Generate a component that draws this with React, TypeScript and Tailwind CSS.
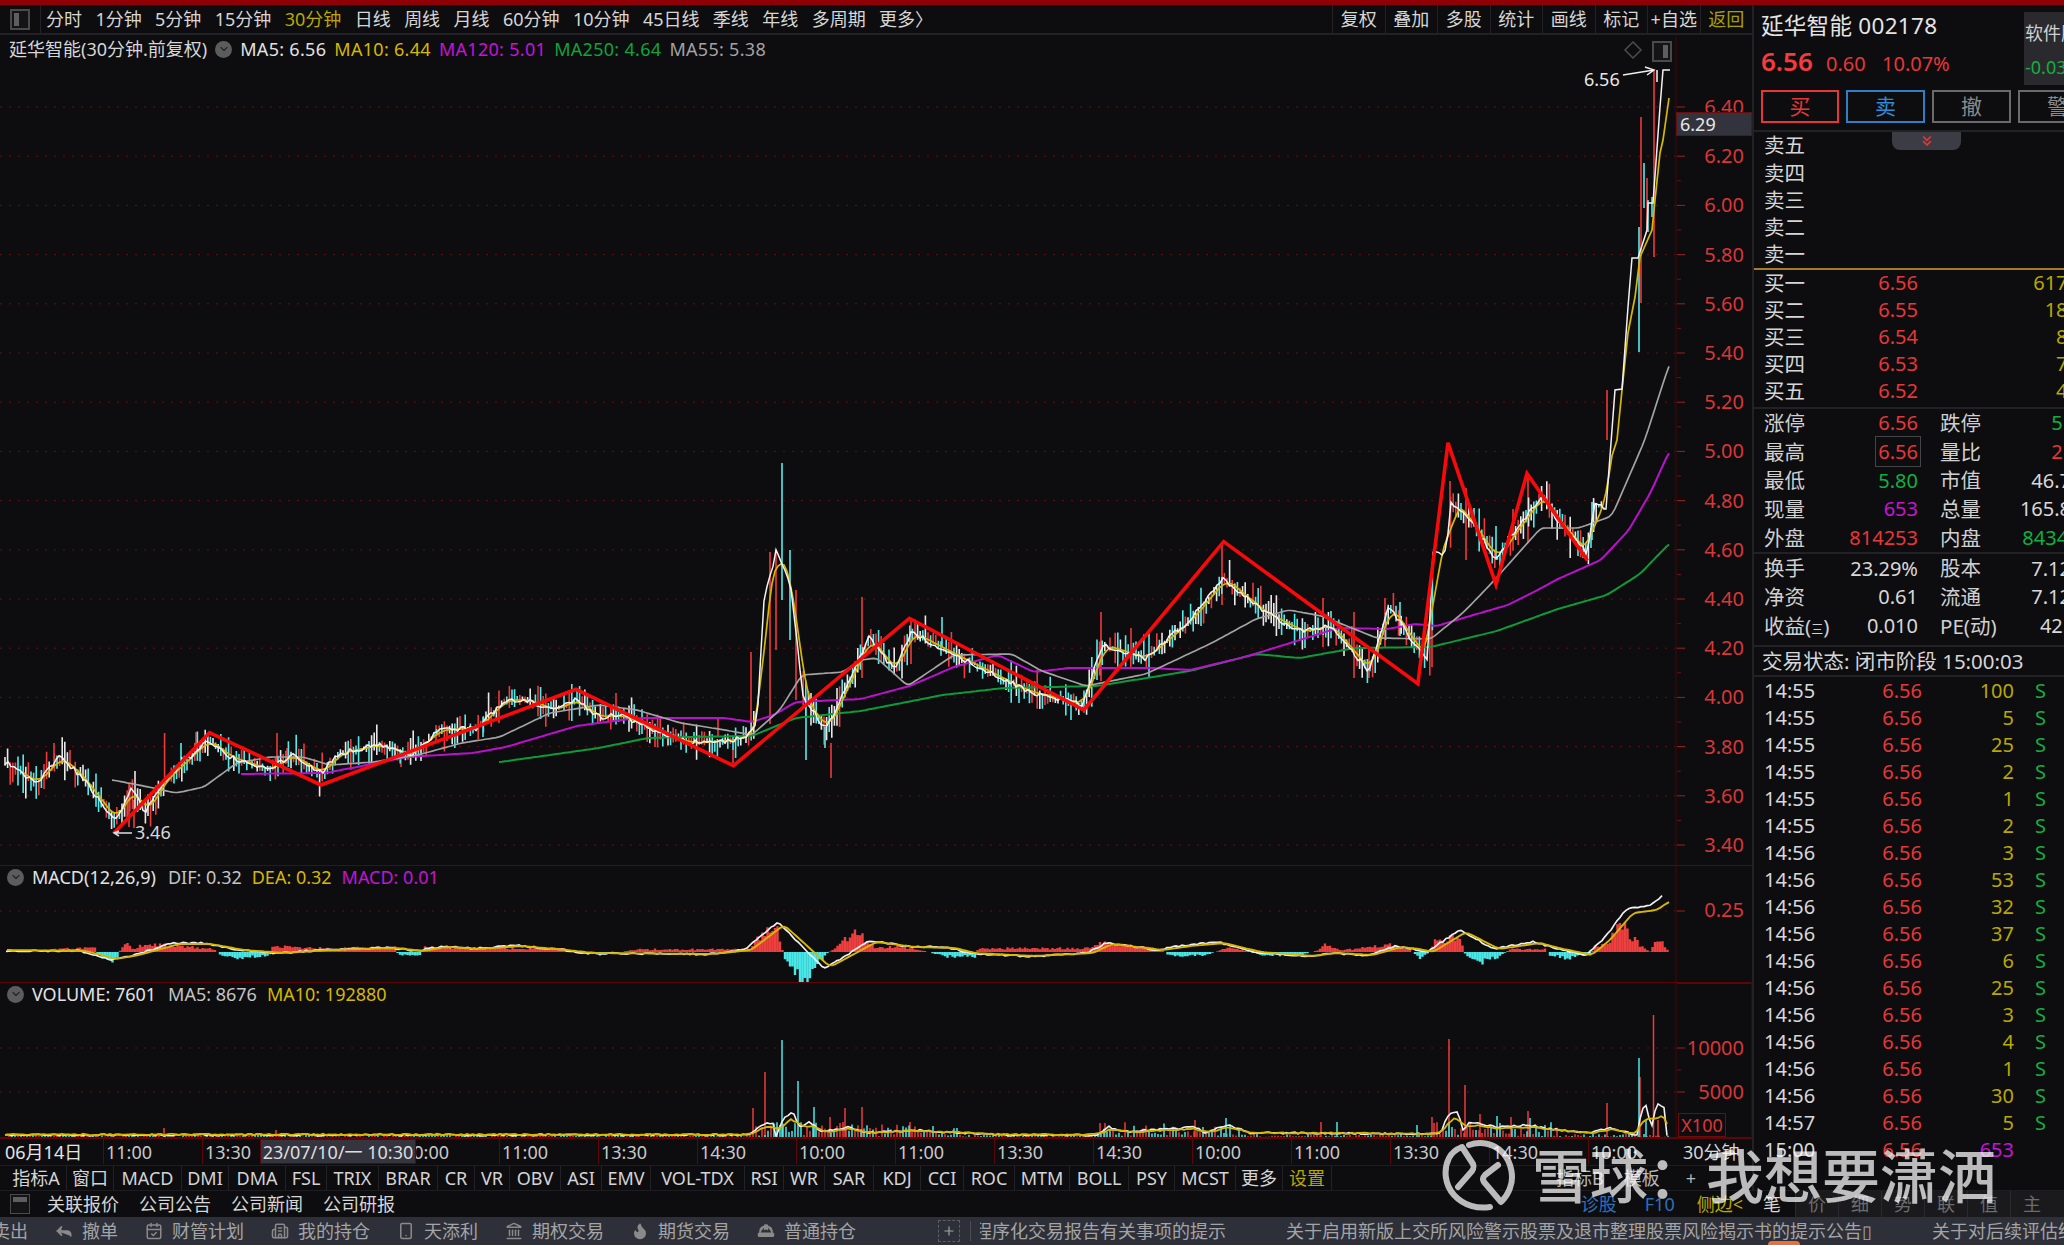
import { ChevronDown, ChevronsDown, Reply, CalendarCheck, Building2, Smartphone, Landmark, Flame, HardHat, Plus } from "lucide-react";

type Pt = [number, number];

const ZIGZAG: Pt[] = [[114, 833], [209.5, 732.7], [321, 785], [576, 689.3], [733.4, 765.7], [909.4, 618.4], [1083.8, 710], [1223.7, 541.6], [1417.9, 683.8], [1448, 442.8], [1496, 584.6], [1527, 473.4], [1587.4, 560.5]];

const MA5: Pt[] = [[5, 762], [36, 783], [60, 757], [82, 777], [115, 820], [132, 788], [145, 813], [165, 780], [208, 740], [230, 757], [269, 770], [291, 755], [321, 773], [340, 753], [378, 745], [411, 755], [439, 730], [477, 728], [505, 700], [527, 700], [554, 710], [576, 700], [598, 717], [620, 715], [658, 732], [691, 743], [735, 740], [751, 733], [757, 724], [764, 600], [776, 552], [790, 580], [803, 697], [826, 730], [869, 638], [895, 671], [911, 632], [961, 658], [1027, 691], [1082, 704], [1103, 645], [1145, 658], [1191, 619], [1224, 579], [1264, 612], [1303, 632], [1330, 625], [1369, 671], [1389, 605], [1415, 645], [1428, 658], [1433, 553], [1447, 553], [1450, 500], [1469, 519], [1496, 559], [1521, 523], [1543, 495], [1556, 519], [1587, 553], [1595, 505], [1606, 509], [1615, 390], [1622, 389], [1628, 307], [1632, 258], [1638, 258], [1647, 230], [1648, 203], [1653, 203], [1660, 107], [1663, 70], [1670, 70]];

const MA10_END: Pt[] = [[1617, 440], [1622, 390], [1628, 333], [1635, 297], [1640, 257], [1652, 230], [1655, 200], [1660, 153], [1663, 140], [1669, 98]];

const MA55: Pt[] = [[112, 780], [148, 787], [175, 793], [203, 787], [236, 763], [269, 757], [302, 757], [329, 765], [373, 762], [417, 755], [461, 743], [499, 737], [549, 713], [598, 705], [636, 710], [680, 723], [724, 730], [751, 735], [779, 710], [801, 675], [842, 672], [860, 660], [876, 658], [907, 686], [953, 655], [1011, 654], [1041, 671], [1085, 686], [1145, 674], [1211, 643], [1255, 619], [1288, 610], [1321, 616], [1376, 638], [1430, 639], [1463, 612], [1491, 583], [1540, 528], [1578, 528], [1611, 516], [1644, 440], [1660, 390], [1670, 360]];

const MA120: Pt[] = [[241, 774], [324, 773], [351, 768], [406, 757], [472, 753], [505, 747], [576, 726], [620, 720], [642, 718], [724, 718], [751, 722], [773, 715], [795, 702], [860, 699], [909, 686], [953, 667], [997, 655], [1033, 672], [1068, 668], [1151, 668], [1189, 670], [1244, 657], [1299, 640], [1337, 628], [1387, 629], [1414, 624], [1436, 626], [1469, 616], [1507, 605], [1535, 591], [1557, 579], [1600, 560], [1628, 530], [1650, 492], [1669, 450]];

const MA250: Pt[] = [[499, 762], [549, 755], [598, 748], [647, 738], [686, 737], [751, 736], [795, 718], [860, 711], [942, 695], [1003, 688], [1096, 686], [1189, 671], [1255, 654], [1299, 658], [1354, 648], [1430, 647], [1496, 631], [1557, 609], [1606, 595], [1639, 574], [1669, 543]];

const SPIKES: [number, number, number, string][] = [
  [54, 743, 763, "r"], [129, 783, 827, "r"], [134, 800, 828, "r"], [164.6, 733, 780, "r"], [181, 743, 763, "c"], [196, 732, 750, "r"], [277, 733, 763, "r"], [287, 748, 763, "r"], [401, 750, 767, "r"], [436, 725, 743, "r"], [483, 717, 737, "c"], [616, 693, 720, "r"], [655, 730, 747, "r"], [718, 718, 737, "r"], [733, 750, 763, "r"], [751, 652, 735, "r"],
  [770, 552, 724, "r"], [776, 550, 650, "r"], [782, 463, 600, "c"], [790, 550, 640, "c"], [796, 590, 700, "r"], [806, 700, 760, "c"], [825, 727, 748, "c"], [831, 743, 778, "r"],
  [862, 597, 678, "r"], [911, 619, 664, "r"], [942, 617, 647, "c"], [1101, 612, 681, "r"], [1131, 628, 660, "r"], [1222, 543, 605, "r"], [1323, 598, 647, "r"], [1354, 612, 678, "r"], [1369, 647, 678, "r"], [1385, 598, 647, "r"], [1400, 602, 636, "c"], [1432, 612, 667, "r"], [1450, 481, 526, "r"], [1466, 488, 560, "r"], [1496, 526, 560, "c"], [1513, 509, 550, "r"], [1528, 474, 543, "r"], [1592, 502, 540, "c"],
  [1607, 390, 440, "r"], [1641, 117, 303, "r"], [1639, 227, 352, "c"], [1644, 163, 208, "c"], [1647, 178, 230, "r"], [1648, 200, 232, "c"], [1654, 70, 257, "r"], [1652, 197, 217, "c"], [1657, 70, 82, "w"],
];

const DEA: Pt[] = [[7, 950], [85, 951], [115, 959], [138, 955], [178, 944], [210, 944], [243, 950], [283, 953], [329, 950], [395, 948], [421, 951], [447, 947], [480, 949], [520, 946], [566, 950], [592, 953], [711, 954], [750, 950], [783, 925], [803, 943], [829, 967], [855, 953], [875, 942], [914, 947], [954, 948], [974, 953], [1032, 956], [1092, 953], [1111, 944], [1162, 950], [1190, 946], [1223, 943], [1260, 952], [1311, 956], [1335, 953], [1372, 955], [1400, 947], [1418, 949], [1432, 952], [1465, 932], [1498, 949], [1539, 943], [1558, 948], [1591, 955], [1609, 940], [1632, 913], [1656, 910], [1669, 901]];

// positive is red, above the zero line; negative is cyan
const HIST: Pt[] = [[40, 0], [60, 4], [95, 4], [98, -4], [115, -10], [119, -2], [121, 5], [125, 12], [132, 3], [145, 8], [180, 7], [215, 3], [220, -4], [245, -7], [270, -3], [273, 6], [300, 5], [325, 4], [395, 5], [398, -3], [420, -3], [425, 5], [500, 4], [560, 4], [600, -3], [640, 3], [750, 3], [770, 30], [778, 26], [783, 0], [785, -8], [805, -36], [826, -2], [835, 4], [855, 24], [875, 4], [890, 6], [915, 4], [945, -5], [975, -5], [978, 4], [1090, 4], [1100, 10], [1120, 8], [1160, 3], [1170, -4], [1205, -4], [1230, 6], [1260, -3], [1300, -4], [1320, 3], [1326, 10], [1340, 2], [1375, 6], [1392, 9], [1410, 3], [1420, -7], [1430, 0], [1435, 14], [1460, 15], [1464, 0], [1466, -4], [1480, -12], [1500, -5], [1510, 3], [1545, 3], [1550, -4], [1570, -7], [1590, -3], [1595, 6], [1610, 9], [1614, 23], [1625, 26], [1640, 7], [1650, 1], [1655, 12], [1662, 13], [1668, 2]];

const VOL_WHITE: Pt[] = [[5, 1135], [750, 1135], [753, 1132], [766, 1123], [773, 1123], [776, 1136], [784, 1117], [793, 1112], [799, 1127], [809, 1122], [822, 1132], [849, 1127], [868, 1133], [914, 1130], [1000, 1135], [1095, 1135], [1102, 1132], [1109, 1127], [1125, 1132], [1195, 1127], [1205, 1133], [1227, 1125], [1251, 1133], [1320, 1133], [1440, 1134], [1449, 1113], [1458, 1112], [1463, 1130], [1470, 1122], [1497, 1127], [1530, 1125], [1544, 1128], [1590, 1133], [1609, 1128], [1637, 1135], [1642, 1108], [1647, 1105], [1651, 1130], [1657, 1103], [1664, 1108], [1667, 1135], [1669, 1136]];

const VOL_SPIKES: [number, number, string][] = [[164, 1128, "r"], [276, 1130, "r"], [753, 1108, "r"], [765, 1072, "r"], [782, 1040, "c"], [798, 1081, "c"], [814, 1107, "c"], [830, 1117, "r"], [845, 1108, "r"], [862, 1107, "r"], [910, 1122, "r"], [1100, 1123, "r"], [1105, 1123, "r"], [1195, 1120, "r"], [1226, 1118, "c"], [1321, 1122, "r"], [1337, 1122, "c"], [1417, 1125, "c"], [1432, 1117, "r"], [1449, 1039, "r"], [1465, 1085, "r"], [1480, 1114, "r"], [1497, 1116, "c"], [1511, 1117, "r"], [1528, 1111, "r"], [1530, 1118, "c"], [1607, 1103, "r"], [1639, 1058, "c"], [1640, 1077, "r"], [1646, 1120, "c"], [1653.5, 1015, "r"], [1658, 1120, "r"]];

let seed = 91;
function rnd() {
  seed = (seed * 16807) % 2147483647;
  return seed / 2147483647;
}

function at(pts: Pt[], x: number) {
  if (x <= pts[0][0]) return pts[0][1];
  for (let i = 1; i < pts.length; i++) {
    if (x <= pts[i][0]) {
      const [x0, y0] = pts[i - 1];
      const [x1, y1] = pts[i];
      return y0 + ((y1 - y0) * (x - x0)) / (x1 - x0 || 1);
    }
  }
  return pts[pts.length - 1][1];
}

function toLine(pts: Pt[]) {
  return pts.map((p) => `${p[0].toFixed(1)},${p[1].toFixed(1)}`).join(" ");
}

function smoothed(pts: Pt[], from: number, to: number, win: number, step = 3) {
  const out: Pt[] = [];
  for (let x = from; x <= to; x += step) {
    let sum = 0;
    for (let k = 0; k < win; k++) sum += at(pts, x - k + win / 3);
    out.push([x, sum / win]);
  }
  return out;
}

// sampled line with a little jitter so it does not look ruled
function jittered(pts: Pt[], from: number, to: number, amount: number, step = 3) {
  const out: Pt[] = [];
  for (let x = from; x <= to; x += step) {
    out.push([x, at(pts, x) + (rnd() - 0.5) * amount]);
  }
  return out;
}

function buildCandles() {
  let red = "";
  let cyan = "";
  let white = "";
  for (let x = 5; x < 1606; x += 2.6) {
    if ((x > 756 && x < 802) || (x > 1433 && x < 1450)) continue;
    const c = at(MA5, x);
    const prev = at(MA5, x - 3);
    const len = 5 + rnd() * 20;
    const top = Math.min(c, prev) - rnd() * len;
    const bot = Math.max(c, prev) + rnd() * len;
    const seg = `M${x.toFixed(1)} ${top.toFixed(1)}V${bot.toFixed(1)}`;
    const r = rnd();
    if (r < 0.28) red += seg;
    else if (r < 0.68) cyan += seg;
    else white += seg;
  }
  SPIKES.forEach(([x, a, b, col]) => {
    const seg = `M${x} ${a}V${b}`;
    if (col === "r") red += seg;
    else if (col === "c") cyan += seg;
    else white += seg;
  });
  return { red, cyan, white };
}

function buildHist() {
  let red = "";
  let cyan = "";
  for (let x = 40; x < 1669; x += 2.5) {
    const h = at(HIST, x);
    if (Math.abs(h) < 0.6) continue;
    const v = h * (0.6 + rnd() * 0.6);
    const seg = `M${x} 952V${(952 - v).toFixed(1)}`;
    if (h > 0) red += seg;
    else cyan += seg;
  }
  return { red, cyan };
}

function buildVolume() {
  let red = "";
  let cyan = "";
  for (let x = 6; x < 1669; x += 3) {
    const busy = (x > 750 && x < 960) || (x > 1095 && x < 1240) || (x > 1430 && x < 1560);
    const h = busy ? 2 + rnd() * 14 : 1 + rnd() * 3;
    const seg = `M${x} 1138V${(1138 - h).toFixed(1)}`;
    if (rnd() < 0.55) red += seg;
    else cyan += seg;
  }
  VOL_SPIKES.forEach(([x, y, col]) => {
    const seg = `M${x} 1138V${y}`;
    if (col === "r") red += seg;
    else cyan += seg;
  });
  return { red, cyan };
}

const candles = buildCandles();
const hist = buildHist();
const vol = buildVolume();
const MA5_LINE: Pt[] = [...jittered(MA5, 5, 1604, 5), ...MA5.filter((p) => p[0] >= 1606)];
const MA10: Pt[] = [...smoothed(MA5, 22, 1612, 18), ...MA10_END];
const MA55_LINE = smoothed(MA55, 112, 1670, 8);
const MA120_LINE = smoothed(MA120, 241, 1669, 8);
const MA250_LINE = smoothed(MA250, 499, 1669, 8);
const DEA_LINE = smoothed(DEA, 7, 1669, 9);
const DIF_LINE = jittered(
  DEA.map((p): Pt => [p[0] - 5, 952 + (p[1] - 952) * 1.12]).filter((p) => p[0] > 5),
  6,
  1664,
  1.6,
);
const VOL_WHITE_LINE = jittered(VOL_WHITE, 5, 1669, 2);
const VOL_YELLOW = smoothed(VOL_WHITE, 5, 1669, 14).map((p): Pt => [p[0], 1134.5 - (1135 - p[1]) * 0.75 + (rnd() - 0.5) * 1.4]);

const PRICES = ["6.40", "6.20", "6.00", "5.80", "5.60", "5.40", "5.20", "5.00", "4.80", "4.60", "4.40", "4.20", "4.00", "3.80", "3.60", "3.40"];
const CURVE_GREY = "#a3a3a3";
const AXIS_RED = "#d93636";
const GRID = "#6e0c0c";

function CircleArrow() {
  return (
    <span className="flex h-[17px] w-[17px] items-center justify-center rounded-full bg-[#5c5c5c]">
      <ChevronDown size={12} strokeWidth={2.5} className="text-[#262626]" />
    </span>
  );
}

function PanelIcon() {
  return (
    <span className="flex h-[21px] w-[20px] justify-end border-2 border-[#4a4a4a] bg-[#141416] p-[2px]">
      <span className="w-[5px] bg-[#5e5e5e]" />
    </span>
  );
}

function MainChart() {
  return (
    <div className="relative h-[831px] border-b border-[#5f0505]">
      <svg viewBox="0 35 1752 830" width={1752} height={830} className="block">
        {PRICES.map((p, i) => {
          const y = 107 + i * 49.2;
          return (
            <g key={p}>
              <line x1={0} x2={1676} y1={y} y2={y} stroke={GRID} strokeDasharray="2 7" />
              <line x1={1677} x2={1685} y1={y} y2={y} stroke="#a02020" />
              <line x1={1677} x2={1681} y1={y + 24.6} y2={y + 24.6} stroke="#701010" />
              <text x={1744} y={y + 7} textAnchor="end" fontSize={20} fill={AXIS_RED}>{p}</text>
            </g>
          );
        })}
        <line x1={1676} x2={1676} y1={35} y2={865} stroke="#4a0606" />
        <path d={candles.red} stroke="#ef3a3a" strokeWidth={1.6} fill="none" />
        <path d={candles.cyan} stroke="#55eaea" strokeWidth={1.6} fill="none" />
        <path d={candles.white} stroke="#e8e8e8" strokeWidth={1.6} fill="none" />
        <polyline points={toLine(MA250_LINE)} stroke="#0f9a3a" strokeWidth={2} fill="none" />
        <polyline points={toLine(MA120_LINE)} stroke="#bb11cc" strokeWidth={2} fill="none" />
        <polyline points={toLine(MA55_LINE)} stroke={CURVE_GREY} strokeWidth={1.7} fill="none" />
        <polyline points={toLine(MA10)} stroke="#d6b800" strokeWidth={1.7} fill="none" />
        <polyline points={toLine(MA5_LINE)} stroke="#f2f2f2" strokeWidth={1.5} fill="none" />
        <polyline points={toLine(ZIGZAG)} stroke="#f80a0a" strokeWidth={3.6} strokeLinejoin="miter" fill="none" />
        <path d="M1623 75 L1654 70 M1645 67 L1654 70 L1647 75" stroke="#eeeeee" strokeWidth={1.5} fill="none" />
        <text x={1584} y={86} fontSize={18} fill="#e6e6e6">6.56</text>
        <path d="M119 831 L114 833 L119 836 M114 833 H132" stroke="#dddddd" strokeWidth={1.5} fill="none" />
        <text x={135} y={839} fontSize={18} fill="#d8d8d8">3.46</text>
        <path d="M1633 42 L1641 50 L1633 58 L1625 50 Z" stroke="#4c4c4c" strokeWidth={1.5} fill="none" />
      </svg>
      <div className="absolute left-[9px] top-[3px] flex h-[22px] items-center gap-[8px] text-[18px] leading-none">
        <span className="text-[#d6d6d6]">延华智能(30分钟.前复权)</span>
        <CircleArrow />
        <span className="tracking-[0.3px] text-[#e2e2e2]">MA5: 6.56</span>
        <span className="tracking-[0.3px] text-[#d6b800]">MA10: 6.44</span>
        <span className="tracking-[0.3px] text-[#c414d6]">MA120: 5.01</span>
        <span className="tracking-[0.3px] text-[#10a23c]">MA250: 4.64</span>
        <span className="tracking-[0.3px] text-[#a3a3a3]">MA55: 5.38</span>
      </div>
      <div className="absolute left-[1652px] top-[6px]">
        <PanelIcon />
      </div>
      <div className="absolute left-[1676px] top-[77px] flex h-[24px] w-[76px] items-center border border-[#6b0d0d] bg-[#33333d] pl-[3px] text-[18px] leading-none text-[#e8e8e8]">
        6.29
      </div>
    </div>
  );
}

function MacdChart() {
  return (
    <div className="relative h-[117px] border-b border-[#5f0505]">
      <svg viewBox="0 866 1752 116" width={1752} height={116} className="block">
        <line x1={0} x2={1676} y1={911} y2={911} stroke={GRID} strokeDasharray="2 7" />
        <line x1={1677} x2={1685} y1={911} y2={911} stroke="#a02020" />
        <line x1={1676} x2={1676} y1={866} y2={982} stroke="#4a0606" />
        <text x={1744} y={917} textAnchor="end" fontSize={20} fill={AXIS_RED}>0.25</text>
        <path d={hist.red} stroke="#ef3f3f" strokeWidth={2.4} fill="none" />
        <path d={hist.cyan} stroke="#48e8e8" strokeWidth={2.4} fill="none" />
        <polyline points={toLine(DIF_LINE)} stroke="#f0f0f0" strokeWidth={1.7} fill="none" />
        <polyline points={toLine(DEA_LINE)} stroke="#d6b800" strokeWidth={1.9} fill="none" />
      </svg>
      <div className="absolute left-[7px] top-0 flex h-[22px] items-center gap-[10px] text-[18px] leading-none">
        <CircleArrow />
        <span className="ml-[-2px] mr-[2px] text-[#e2e2e2]">MACD(12,26,9)</span>
        <span className="text-[#c4c4c4]">DIF: 0.32</span>
        <span className="text-[#d6b800]">DEA: 0.32</span>
        <span className="text-[#c414d6]">MACD: 0.01</span>
      </div>
    </div>
  );
}

function VolumeChart() {
  return (
    <div className="relative h-[156px] border-b-2 border-[#5f0505]">
      <svg viewBox="0 983 1752 154" width={1752} height={154} className="block">
        <line x1={0} x2={1676} y1={1048} y2={1048} stroke={GRID} strokeDasharray="2 7" />
        <line x1={0} x2={1676} y1={1092} y2={1092} stroke={GRID} strokeDasharray="2 7" />
        <line x1={1677} x2={1685} y1={1048} y2={1048} stroke="#a02020" />
        <line x1={1677} x2={1685} y1={1092} y2={1092} stroke="#a02020" />
        <line x1={1677} x2={1681} y1={1070} y2={1070} stroke="#701010" />
        <line x1={1676} x2={1676} y1={983} y2={1137} stroke="#4a0606" />
        <line x1={1677} x2={1751} y1={983.5} y2={983.5} stroke="#5f0505" />
        <line x1={1751.5} x2={1751.5} y1={983} y2={1137} stroke="#3a0505" />
        <text x={1744} y={1055} textAnchor="end" fontSize={20} fill={AXIS_RED}>10000</text>
        <text x={1744} y={1099} textAnchor="end" fontSize={20} fill={AXIS_RED}>5000</text>
        <path d={vol.red} stroke="#ef3a3a" strokeWidth={1.5} fill="none" />
        <path d={vol.cyan} stroke="#48e8e8" strokeWidth={1.5} fill="none" />
        <polyline points={toLine(VOL_WHITE_LINE)} stroke="#f0f0f0" strokeWidth={1.6} fill="none" />
        <polyline points={toLine(VOL_YELLOW)} stroke="#d6b800" strokeWidth={1.8} fill="none" />
      </svg>
      <div className="absolute left-[7px] top-0 flex h-[22px] items-center gap-[10px] text-[18px] leading-none">
        <CircleArrow />
        <span className="ml-[-2px] mr-[2px] text-[#e2e2e2]">VOLUME: 7601</span>
        <span className="text-[#c4c4c4]">MA5: 8676</span>
        <span className="text-[#d6b800]">MA10: 192880</span>
      </div>
      <div className="absolute left-[1678px] top-[130px] flex h-[24px] w-[48px] items-center justify-center border border-[#6b0d0d] text-[18px] leading-none text-[#d93636]">
        X100
      </div>
    </div>
  );
}

const TIME_LABELS = ["11:00", "13:30", "14:30", "10:00", "11:00", "13:30", "14:30", "10:00", "11:00", "13:30", "14:30", "10:00", "11:00", "13:30", "14:30", "10:00"];

function TimeAxis() {
  return (
    <div className="relative flex h-[26px] items-center pb-[1px] text-[18px] leading-none text-[#c8c8c8]">
      <span className="w-[103px] pl-[5px] text-[#e4e4e4]">06月14日</span>
      {TIME_LABELS.map((t, i) => (
        <span key={i} className="flex h-full w-[99px] shrink-0 items-center border-l border-[#5f0505] pl-[2px]">
          {t}
        </span>
      ))}
      <span className="ml-[-4px] text-[#d8d8d8]">30分钟</span>
      <div className="absolute left-[260px] top-0 flex h-[25px] w-[156px] items-center justify-center border border-[#5f0505] bg-[#35353f] text-[#dedede]">
        23/07/10/一 10:30
      </div>
    </div>
  );
}

const INDEX_TABS = [
  { t: "指标A", w: "w-[61px]" },
  { t: "窗口", w: "w-[47px]" },
  { t: "MACD", w: "w-[68px]" },
  { t: "DMI", w: "w-[47px]" },
  { t: "DMA", w: "w-[57px]" },
  { t: "FSL", w: "w-[41px]" },
  { t: "TRIX", w: "w-[52px]" },
  { t: "BRAR", w: "w-[59px]" },
  { t: "CR", w: "w-[37px]" },
  { t: "VR", w: "w-[35px]" },
  { t: "OBV", w: "w-[51px]" },
  { t: "ASI", w: "w-[41px]" },
  { t: "EMV", w: "w-[49px]" },
  { t: "VOL-TDX", w: "w-[94px]" },
  { t: "RSI", w: "w-[39px]" },
  { t: "WR", w: "w-[41px]" },
  { t: "SAR", w: "w-[49px]" },
  { t: "KDJ", w: "w-[47px]" },
  { t: "CCI", w: "w-[43px]" },
  { t: "ROC", w: "w-[51px]" },
  { t: "MTM", w: "w-[55px]" },
  { t: "BOLL", w: "w-[59px]" },
  { t: "PSY", w: "w-[46px]" },
  { t: "MCST", w: "w-[61px]" },
  { t: "更多", w: "w-[47px]" },
];

function IndexTabs() {
  return (
    <div className="flex h-[25px] border-t border-[#1e1e22] pl-[6px] text-[18px] leading-none text-[#d4d4d4]">
      {INDEX_TABS.map((tab) => (
        <span key={tab.t} className={`flex items-center justify-center border-r border-[#232327] ${tab.w}`}>
          {tab.t}
        </span>
      ))}
      <span className="flex w-[49px] items-center justify-center border-r border-[#232327] text-[#b8a800]">设置</span>
      <span className="ml-[224px] flex items-center text-[#b8b8b8]">指标B</span>
      <span className="ml-[20px] flex items-center text-[#b8b8b8]">模板</span>
      <span className="ml-[26px] flex items-center text-[#b8b8b8]">+</span>
    </div>
  );
}

const PERIODS = ["分时", "1分钟", "5分钟", "15分钟", "30分钟", "日线", "周线", "月线", "60分钟", "10分钟", "45日线", "季线", "年线", "多周期", "更多〉"];
const TOOLS = ["复权", "叠加", "多股", "统计", "画线", "标记", "+自选", "返回"];

function Toolbar() {
  return (
    <div className="flex h-[30px] items-center border-b-2 border-[#222226] text-[18px] leading-none text-[#d6d6d6]">
      <div className="flex h-full w-[41px] items-center justify-center border-r border-[#232327]">
        <span className="flex h-[21px] w-[20px] border-2 border-[#4a4a4a] bg-[#141416] p-[2px]">
          <span className="w-[5px] bg-[#5e5e5e]" />
        </span>
      </div>
      <div className="ml-[5px] flex gap-[13.4px]">
        {PERIODS.map((p) => (
          <span key={p} className={p === "30分钟" ? "text-[#b8a800]" : ""}>{p}</span>
        ))}
      </div>
      <div className="ml-auto flex h-full">
        {TOOLS.map((t) => (
          <span key={t} className={`flex w-[52.5px] items-center justify-center border-l border-[#232327] ${t === "返回" ? "text-[#a8a000]" : ""}`}>
            {t}
          </span>
        ))}
      </div>
    </div>
  );
}

const SELL = ["卖五", "卖四", "卖三", "卖二", "卖一"];
const BUY = [
  ["买一", "6.56", "6173"],
  ["买二", "6.55", "183"],
  ["买三", "6.54", "85"],
  ["买四", "6.53", "72"],
  ["买五", "6.52", "41"],
];
const TRADES = [
  ["14:55", "100"], ["14:55", "5"], ["14:55", "25"], ["14:55", "2"], ["14:55", "1"], ["14:55", "2"],
  ["14:56", "3"], ["14:56", "53"], ["14:56", "32"], ["14:56", "37"], ["14:56", "6"], ["14:56", "25"],
  ["14:56", "3"], ["14:56", "4"], ["14:56", "1"], ["14:56", "30"], ["14:57", "5"],
];

function StatRow({ a, b, c, d, bColor, dColor, boxed }: { a: React.ReactNode; b: string; c: string; d: string; bColor?: string; dColor?: string; boxed?: boolean }) {
  return (
    <div className="flex h-[28.7px] items-center">
      <span className="w-[70px] shrink-0 whitespace-nowrap text-[20.5px] text-[#d0d0d0]">{a}</span>
      <span className={`w-[84px] shrink-0 text-right ${bColor ?? "text-[#d8d8d8]"}`}>
        {boxed ? <span className="mr-[-3px] border border-[#444448] px-[2px] py-[1px]">{b}</span> : b}
      </span>
      <span className="ml-[22px] w-[60px] shrink-0 whitespace-nowrap text-[20.5px] text-[#d0d0d0]">{c}</span>
      <span className={`w-[91px] shrink-0 text-right ${dColor ?? "text-[#d8d8d8]"}`}>{d}</span>
    </div>
  );
}

function SidePanel() {
  return (
    <div className="w-[312px] shrink-0 overflow-hidden border-l-2 border-[#222226] text-[20px] leading-none">
      <div className="w-[345px]">
        <div className="h-[127px] border-b-2 border-[#222226] pl-[7px]">
          <div className="flex h-[85px] items-start">
            <div className="w-[263px]">
              <div className="mt-[8px] whitespace-nowrap text-[22.5px] leading-[26px] tracking-[0.3px] text-[#e4e4e4]">延华智能 002178</div>
              <div className="mt-[9px] flex items-baseline text-[#e53737]">
                <span className="w-[65px] text-[26px] font-semibold leading-[26px] text-[#f53c3c]">6.56</span>
                <span className="w-[56px] text-[20px]">0.60</span>
                <span className="text-[20px]">10.07%</span>
              </div>
            </div>
            <div className="mt-[7px] h-[73px] w-[60px] bg-[#2a2a2e] pl-[1px] pt-[12px] text-[18px]">
              <div className="text-[#d0d0d0]">软件服</div>
              <div className="mt-[16px] text-[#10b040]">-0.03</div>
            </div>
          </div>
          <div className="flex gap-[7px] text-[21px]">
            <span className="flex h-[33px] w-[78px] items-center justify-center border-2 border-[#e53737] text-[#e53737]">买</span>
            <span className="flex h-[33px] w-[79px] items-center justify-center border-2 border-[#2f7fc8] text-[#2f8ad8]">卖</span>
            <span className="flex h-[33px] w-[79px] items-center justify-center border-2 border-[#6a6a6a] text-[#8a8a8a]">撤</span>
            <span className="flex h-[33px] w-[79px] items-center justify-center border-2 border-[#6a6a6a] text-[#8a8a8a]">警</span>
          </div>
        </div>
        <div className="relative pl-[10px] text-[20.5px] text-[#d6d6d6]">
          {SELL.map((s) => (
            <div key={s} className="flex h-[27.2px] items-center">{s}</div>
          ))}
          <div className="absolute left-[138px] top-0 flex h-[18px] w-[69px] items-center justify-center rounded-b-[8px] bg-[#3c3c44]">
            <ChevronsDown size={16} strokeWidth={2.5} className="text-[#e53737]" />
          </div>
        </div>
        <div className="h-[2px] bg-[#a87a2c]" />
        <div className="border-b-2 border-[#222226] pb-[2px] pl-[10px]">
          {BUY.map(([l, p, v]) => (
            <div key={l} className="flex h-[27px] items-center">
              <span className="w-[80px] shrink-0 text-[20.5px] text-[#d6d6d6]">{l}</span>
              <span className="w-[74px] shrink-0 text-right text-[#e53737]">{p}</span>
              <span className="w-[161px] shrink-0 text-right text-[#b8a800]">{v}</span>
            </div>
          ))}
        </div>
        <div className="border-b-2 border-[#222226] pl-[10px]">
          <StatRow a="涨停" b="6.56" c="跌停" d="5.36" bColor="text-[#e53737]" dColor="text-[#10b040]" />
          <StatRow a="最高" b="6.56" c="量比" d="2.54" bColor="text-[#e53737]" dColor="text-[#e53737]" boxed />
          <StatRow a="最低" b="5.80" c="市值" d="46.7亿" bColor="text-[#10b040]" />
          <StatRow a="现量" b="653" c="总量" d="165.8万" bColor="text-[#c414d6]" />
          <StatRow a="外盘" b="814253" c="内盘" d="843472" bColor="text-[#e53737]" dColor="text-[#10b040]" />
        </div>
        <div className="h-[93px] border-b-2 border-[#222226] pl-[10px]">
          <StatRow a="换手" b="23.29%" c="股本" d="7.12亿" />
          <StatRow a="净资" b="0.61" c="流通" d="7.12亿" />
          <StatRow a={<>收益(<span className="text-[12px]">三</span>)</>} b="0.010" c="PE(动)" d="42.42" />
        </div>
        <div className="flex h-[30px] items-center border-b-2 border-[#222226] pl-[8px] text-[#d6d6d6]">
          <span className="text-[20.5px]">交易状态: 闭市阶段 15:00:03</span>
        </div>
        <div className="pl-[10px]">
          {TRADES.map(([t, v], i) => (
            <div key={i} className="flex h-[27px] items-center">
              <span className="w-[80px] text-[#d8d8d8]">{t}</span>
              <span className="w-[78px] text-right text-[#e53737]">6.56</span>
              <span className="w-[92px] text-right text-[#b8a800]">{v}</span>
              <span className="ml-[21px] text-[#10b040]">S</span>
            </div>
          ))}
          <div className="flex h-[27px] items-center">
            <span className="w-[80px] text-[#d8d8d8]">15:00</span>
            <span className="w-[78px] text-right text-[#e53737]">6.56</span>
            <span className="w-[92px] text-right text-[#c414d6]">653</span>
          </div>
        </div>
      </div>
    </div>
  );
}

function BottomRow() {
  return (
    <div className="flex h-[27px] items-center border-t border-[#1e1e22] text-[18px] leading-none">
      <div className="ml-[10px] flex h-[20px] w-[20px] flex-col border border-[#4a4a4a] bg-[#141416] p-[2px]">
        <span className="h-[5px] bg-[#5e5e5e]" />
      </div>
      <div className="ml-[17px] flex gap-[20px] text-[#d6d6d6]">
        <span>关联报价</span>
        <span>公司公告</span>
        <span>公司新闻</span>
        <span>公司研报</span>
      </div>
      <span className="ml-auto text-[#2f6fb8]">诊股</span>
      <span className="ml-[28px] text-[#2f6fb8]">F10</span>
      <span className="ml-[22px] text-[#b8a800]">侧边&lt;</span>
      <span className="ml-[20px] mr-[14px] text-[#d6d6d6]">笔</span>
      <div className="flex h-full bg-[#1a1a1d] pr-[11px]">
        {["价", "细", "势", "联", "值", "主"].map((t) => (
          <span key={t} className="flex w-[43px] items-center justify-center border-l border-[#2a2a2e] text-[#6c6c6c]">{t}</span>
        ))}
      </div>
    </div>
  );
}

function StatusItem({ icon, text }: { icon: React.ReactNode; text: string }) {
  return (
    <span className="flex shrink-0 items-center gap-[8px]">
      <span className="flex w-[20px] justify-center text-[#8a8a8a]">{icon}</span>
      {text}
    </span>
  );
}

function StatusBar() {
  return (
    <div className="relative flex h-[28px] items-center overflow-hidden bg-[#2e3039] text-[18px] leading-none text-[#a4a4a4]">
      <div className="flex w-[858px] shrink-0 items-center gap-[26px]">
        <span className="ml-[-8px]">卖出</span>
        <StatusItem icon={<Reply size={20} fill="currentColor" />} text="撤单" />
        <StatusItem icon={<CalendarCheck size={18} />} text="财管计划" />
        <StatusItem icon={<Building2 size={18} />} text="我的持仓" />
        <StatusItem icon={<Smartphone size={18} />} text="天添利" />
        <StatusItem icon={<Landmark size={18} />} text="期权交易" />
        <StatusItem icon={<Flame size={18} fill="currentColor" />} text="期货交易" />
        <StatusItem icon={<HardHat size={18} fill="currentColor" />} text="普通持仓" />
      </div>
      <span className="ml-[80px] flex h-[22px] w-[22px] shrink-0 items-center justify-center border border-dashed border-[#5e5e5e]">
        <Plus size={14} />
      </span>
      <span className="ml-[10px] h-[20px] w-px shrink-0 bg-[#4e4e4e]" />
      <div className="ml-[9px] flex min-w-0 flex-1 overflow-hidden whitespace-nowrap">
        <div className="ml-[-24px] flex gap-[60px]">
          <span>暨程序化交易报告有关事项的提示</span>
          <span>关于启用新版上交所风险警示股票及退市整理股票风险揭示书的提示公告▯</span>
          <span>关于对后续评估结果的提示</span>
        </div>
      </div>
      <span className="absolute bottom-0 left-[1768px] h-[4px] w-[32px] rounded-t-[4px] bg-[#e8703a]" />
    </div>
  );
}

function Watermark() {
  return (
    <div className="pointer-events-none absolute left-[1442px] top-[1140px] flex items-center gap-[16px] text-[#ffffffb8]">
      <svg width={74} height={72} viewBox="0 0 74 72" fill="none" stroke="#ffffffb8" strokeWidth={6} strokeLinecap="round" strokeLinejoin="round">
        <path d="M48 67 C36 69 22 66 12 55 C3 45 1 30 7 18 C10 12 15 9 20 7 L31 24 C32 27 32 28 30 31 L16 47" />
        <path d="M27 5 C38 1 52 3 61 13 C70 23 72 38 68 48 C66 54 63 58 59 62 L42 42 C40 39 41 37 43 35 L56 25" />
      </svg>
      <span className="whitespace-nowrap text-[58px] font-medium leading-[72px]">雪球：我想要潇洒</span>
    </div>
  );
}

export default function App() {
  return (
    <div className="relative flex h-[1245px] w-[2064px] flex-col overflow-hidden bg-[#0d0d10] font-['Noto_Sans','Noto_Sans_CJK_SC',sans-serif]">
      <div className="h-[5px] shrink-0 bg-[#8f0006]" />
      <div className="flex h-[1185px] shrink-0">
        <div className="w-[1752px] shrink-0">
          <Toolbar />
          <MainChart />
          <MacdChart />
          <VolumeChart />
          <TimeAxis />
          <IndexTabs />
        </div>
        <SidePanel />
      </div>
      <BottomRow />
      <StatusBar />
      <Watermark />
    </div>
  );
}
